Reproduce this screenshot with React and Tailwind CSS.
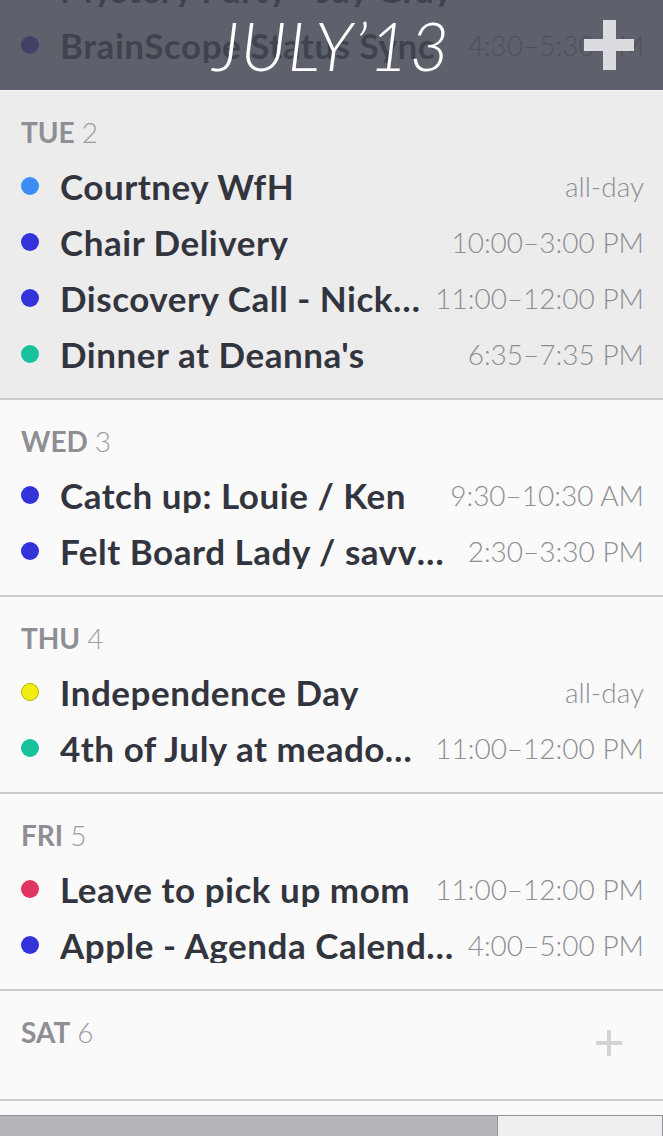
import React from "react";

const BLUE = "bg-[#3333d9]";

const days = [
  {
    label: "TUE",
    num: "2",
    today: true,
    events: [
      { title: "Courtney WfH", time: "all-day", dot: "bg-[#3c8ef6]" },
      { title: "Chair Delivery", time: "10:00–3:00 PM", dot: BLUE },
      { title: "Discovery Call - Nick Smith", time: "11:00–12:00 PM", dot: BLUE },
      { title: "Dinner at Deanna's", time: "6:35–7:35 PM", dot: "bg-[#17c29a]" },
    ],
  },
  {
    label: "WED",
    num: "3",
    events: [
      { title: "Catch up: Louie / Ken", time: "9:30–10:30 AM", dot: BLUE },
      { title: "Felt Board Lady / savvy shop", time: "2:30–3:30 PM", dot: BLUE },
    ],
  },
  {
    label: "THU",
    num: "4",
    events: [
      {
        title: "Independence Day",
        time: "all-day",
        dot: "bg-[#f2ee12] border border-[#b9b400]",
      },
      { title: "4th of July at meadow park", time: "11:00–12:00 PM", dot: "bg-[#17c29a]" },
    ],
  },
  {
    label: "FRI",
    num: "5",
    events: [
      { title: "Leave to pick up mom", time: "11:00–12:00 PM", dot: "bg-[#df3560]" },
      { title: "Apple - Agenda Calendar", time: "4:00–5:00 PM", dot: BLUE },
    ],
  },
];

const EventRow = ({ title, time, dot }) => (
  <div className="flex h-[56px] items-center pl-[21px] pr-[19px]">
    <span className={`h-[18px] w-[18px] shrink-0 rounded-full ${dot}`} />
    <span className="ml-[21px] min-w-0 flex-1 truncate text-[35px] font-bold leading-none tracking-[0.015em] text-[#33353e]">
      {title}
    </span>
    <span className="ml-3 shrink-0 text-[28px] font-light leading-none text-[#8e8e94]">
      {time}
    </span>
  </div>
);

const DayLabel = ({ label, num }) => (
  <div className="flex h-[36px] items-center px-[21px] text-[28px] leading-none">
    <span className="font-bold text-[#8e8e94]">{label}</span>
    <span className="ml-[7px] font-light text-[#9c9ca1]">{num}</span>
  </div>
);

export default function App() {
  return (
    <div className="relative flex h-[1136px] w-full flex-col overflow-hidden bg-[#fafafa] font-['Lato',sans-serif]">
      {/* scrolled list */}
      <div className="-mt-[39px] flex flex-col">
        {/* Monday, mostly scrolled away */}
        <div className="border-b-2 border-[#f7f7f8] pb-4">
          <EventRow title="Mystery Party - Jay Gray" time="2:00–3:00 PM" dot={BLUE} />
          <EventRow title="BrainScope Status Sync" time="4:30–5:30 PM" dot={BLUE} />
        </div>

        {days.map((d) => (
          <section
            key={d.label}
            className={`border-b-2 border-[#c9cacd] pt-[23px] pb-4 ${
              d.today ? "bg-[#ececed]" : "bg-[#fafafa]"
            }`}
          >
            <DayLabel label={d.label} num={d.num} />
            <div className="mt-2 flex flex-col">
              {d.events.map((e) => (
                <EventRow key={e.title} {...e} />
              ))}
            </div>
          </section>
        ))}

        <section className="flex h-[110px] items-start justify-between border-b-2 border-[#c9cacd] pt-[23px] pr-[41px]">
          <DayLabel label="SAT" num="6" />
          <svg width="26" height="26" viewBox="0 0 26 26" className="mt-[16px]">
            <rect x="11" y="0" width="4" height="26" fill="#d2d3d6" />
            <rect x="0" y="11" width="26" height="4" fill="#d2d3d6" />
          </svg>
        </section>
      </div>

      {/* bottom scroll indicator */}
      <div className="mt-auto flex h-[21px] border-t border-[#929397]">
        <div className="w-[497px] bg-[#b5b6ba]" />
        <div className="flex-1 border-l border-r border-[#929397] bg-[#efeff0]" />
      </div>

      {/* translucent month header over the list */}
      <header className="absolute inset-x-0 top-0 grid h-[90px] grid-cols-[1fr_auto_1fr] items-center bg-[rgba(66,69,81,0.85)]">
        <div />
        <h1 className="text-[68px] font-light italic leading-none tracking-[0.02em] text-white">
          JULY’13
        </h1>
        <div className="flex justify-end pr-[29px]">
          <svg width="50" height="50" viewBox="0 0 50 50">
            <rect x="19" y="0" width="13" height="50" fill="#dcdce0" />
            <rect x="0" y="19" width="50" height="12" fill="#dcdce0" />
          </svg>
        </div>
      </header>
    </div>
  );
}
